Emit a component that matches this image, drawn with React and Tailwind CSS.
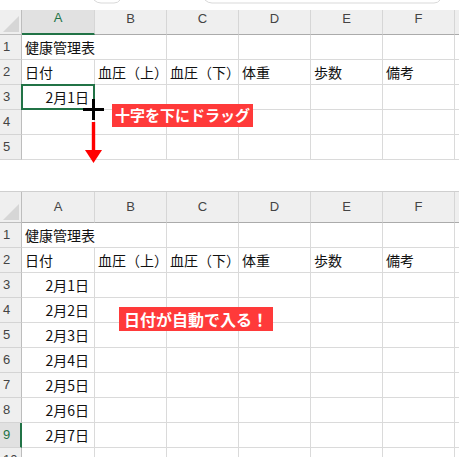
import React from 'react';

const COLS = ['A', 'B', 'C', 'D', 'E', 'F'];
const COL_W = ['w-[73px]', 'w-[72px]', 'w-[72px]', 'w-[72px]', 'w-[72px]', 'w-[72px]'];
const HEAD = ['日付', '血圧（上）', '血圧（下）', '体重', '歩数', '備考'];

const jp = "font-['Noto_Sans_CJK_JP',sans-serif]";
const lat = "font-['Liberation_Sans',Arial,sans-serif]";

function buildRows(count, dates) {
  const rows = [];
  for (let n = 1; n <= count; n++) {
    let cells = ['', '', '', '', '', ''];
    if (n === 1) cells = ['健康管理表', '', '', '', '', ''];
    if (n === 2) cells = HEAD;
    if (n >= 3 && n - 3 < dates) cells = [`2月${n - 2}日`, '', '', '', '', ''];
    rows.push({ n, cells });
  }
  return rows;
}

function HeaderRow({ h, activeCol, topLine }) {
  return (
    <div className={`flex ${h} ${topLine ? 'border-t border-[#cfcfcf]' : ''} bg-[#efefef] ${lat} text-[13px] leading-[14px] text-[#444]`}>
      <div className="relative w-[22px] shrink-0 border-r border-b border-[#bdbdbd]">
        <svg className="absolute right-[2px] bottom-[2px]" width="16" height="16" viewBox="0 0 16 16">
          <polygon points="0,16 16,16 16,0" fill="#d6d6d6" />
        </svg>
      </div>
      {COLS.map((c, i) => {
        const on = c === activeCol;
        return (
          <div
            key={c}
            className={`${COL_W[i]} shrink-0 flex items-end justify-center pb-[8px] border-r border-[#d6d6d6] ${
              on ? 'bg-[#e1e1e1] text-[#217346] border-b-2 border-b-[#217346]' : 'border-b border-b-[#ababab]'
            }`}
          >
            {c}
          </div>
        );
      })}
      <div className="flex-1 border-b border-[#ababab]" />
    </div>
  );
}

function Row({ n, cells, activeRow, selected }) {
  const on = n === activeRow;
  return (
    <div className="flex h-[25px]">
      <div
        className={`w-[22px] shrink-0 flex items-center pl-[3px] ${lat} text-[13px] border-b border-b-[#d4d4d4] ${
          on ? 'bg-[#e1e1e1] text-[#217346] border-r-2 border-r-[#217346]' : 'bg-[#efefef] text-[#444] border-r border-r-[#bdbdbd]'
        }`}
      >
        {n}
      </div>
      {cells.map((t, i) => {
        const isDate = /^2月/.test(t);
        const noRight = n === 1 && i === 0;
        return (
          <div
            key={i}
            className={`${COL_W[i]} shrink-0 relative flex items-center whitespace-nowrap ${jp} text-[14px] text-[#111] border-b border-[#dadada] ${
              noRight ? '' : 'border-r'
            } ${isDate ? 'justify-end pr-[5px]' : 'pl-[3px]'}`}
          >
            <span className={noRight ? 'relative z-10' : ''}>{t}</span>
            {selected && i === 0 && (
              <div className="absolute -left-[1px] -top-[1px] w-[74px] h-[26px] border-2 border-[#217346]" />
            )}
          </div>
        );
      })}
      <div className="flex-1 border-b border-[#dadada]" />
    </div>
  );
}

function Sheet({ rows, headerH, activeCol, activeRow, selectedRow, topLine }) {
  return (
    <div>
      <HeaderRow h={headerH} activeCol={activeCol} topLine={topLine} />
      {rows.map(r => (
        <Row key={r.n} n={r.n} cells={r.cells} activeRow={activeRow} selected={r.n === selectedRow} />
      ))}
    </div>
  );
}

export default function App() {
  const topRows = buildRows(5, 1);
  const bottomRows = buildRows(10, 7);

  return (
    <div className="relative w-[459px] h-[457px] overflow-hidden bg-white">
      {/* タブの名残 */}
      <div className="h-[10px]">
        <svg width="459" height="10" viewBox="0 0 459 10">
          <path d="M94 0 Q97 3 101 3 L114 3 Q118 3 120 0" fill="none" stroke="#d9d9d9" />
          <path d="M205 0 Q208 3 212 3 L434 3 Q438 3 440 0" fill="none" stroke="#d9d9d9" />
        </svg>
      </div>

      <Sheet rows={topRows} headerH="h-[25px]" activeCol="A" activeRow={0} selectedRow={3} />

      <div className="h-[31px]" />

      <Sheet rows={bottomRows} headerH="h-[32px]" activeCol="" activeRow={9} selectedRow={0} topLine />

      {/* 十字カーソル */}
      <svg className="absolute left-[83px] top-[99px]" width="21" height="21" viewBox="0 0 21 21">
        <rect x="9" y="0" width="3" height="21" fill="#000" />
        <rect x="0" y="9" width="21" height="3" fill="#000" />
      </svg>

      {/* 下向き矢印 */}
      <svg className="absolute left-[85px] top-[122px]" width="17" height="42" viewBox="0 0 17 42">
        <rect x="6.8" y="0" width="3.4" height="30" fill="#ff0000" />
        <polygon points="0,28 17,28 8.5,41" fill="#ff0000" />
      </svg>

      <div className={`absolute left-[112px] top-[104px] h-[23px] px-[3px] flex items-center bg-[#ff3a3a] text-white font-bold text-[15px] whitespace-nowrap ${jp}`}>
        十字を下にドラッグ
      </div>

      <div className={`absolute left-[119px] top-[307px] h-[24px] px-[5px] flex items-center bg-[#ff3a3a] text-white font-bold text-[16px] whitespace-nowrap ${jp}`}>
        日付が自動で入る！
      </div>
    </div>
  );
}
